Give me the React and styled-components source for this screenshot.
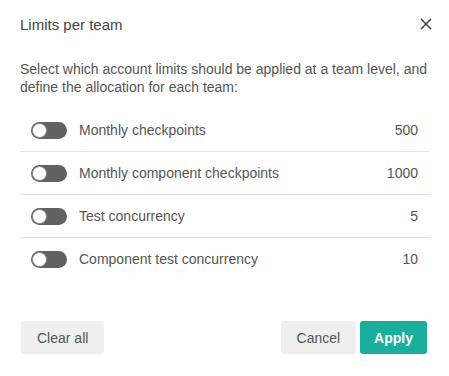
import styled, { createGlobalStyle } from "styled-components";

const GlobalStyle = createGlobalStyle`
  body {
    margin: 0;
    background: #fff;
    font-family: "Liberation Sans", Arial, sans-serif;
  }
`;

const Dialog = styled.div`
  width: 449px;
  height: 376px;
  box-sizing: border-box;
  background: #fff;
  display: flex;
  flex-direction: column;
`;

const Header = styled.div`
  display: flex;
  justify-content: space-between;
  align-items: center;
  padding: 14px 14px 0 20px;
  height: 20px;
`;

const Title = styled.h2`
  margin: 0;
  font-size: 15px;
  font-weight: 400;
  color: #444;
`;

const CloseButton = styled.button`
  border: none;
  background: none;
  padding: 0;
  width: 18px;
  height: 18px;
  display: flex;
  align-items: center;
  justify-content: center;
  cursor: pointer;
`;

const Description = styled.p`
  margin: 26px 20px 13px 20px;
  font-size: 14px;
  line-height: 18px;
  color: #555;
`;

const List = styled.div`
  margin: 0 20px;
  display: flex;
  flex-direction: column;
`;

const Row = styled.div`
  display: flex;
  align-items: center;
  height: 42px;
  padding: 0 11px 0 11px;
  border-bottom: ${(p) => (p.$last ? "none" : "1px solid #e4e4e4")};
`;

const Toggle = styled.span`
  width: 36px;
  height: 17px;
  border-radius: 9px;
  background: #616161;
  position: relative;
  flex-shrink: 0;

  &::after {
    content: "";
    position: absolute;
    left: 1px;
    top: 1px;
    width: 15px;
    height: 15px;
    box-sizing: border-box;
    border-radius: 50%;
    background: #fff;
    border: 1px solid #8a8a8a;
  }
`;

const Label = styled.span`
  margin-left: 12px;
  flex: 1;
  font-size: 14px;
  color: #555;
`;

const Value = styled.span`
  font-size: 14px;
  color: #555;
`;

const Footer = styled.div`
  margin-top: auto;
  display: flex;
  align-items: center;
  padding: 0 22px 22px 21px;
`;

const Spacer = styled.div`
  flex: 1;
`;

const Button = styled.button`
  height: 33px;
  border: none;
  border-radius: 3px;
  padding: ${(p) => (p.$primary ? "0 14px" : "0 16px")};
  font-family: inherit;
  font-size: 14px;
  cursor: pointer;
  background: ${(p) => (p.$primary ? "#1aae9f" : "#efefef")};
  color: ${(p) => (p.$primary ? "#fff" : "#555")};
  font-weight: ${(p) => (p.$primary ? 700 : 400)};
  margin-left: ${(p) => (p.$primary ? "4px" : "0")};
`;

const limits = [
  { label: "Monthly checkpoints", value: 500 },
  { label: "Monthly component checkpoints", value: 1000 },
  { label: "Test concurrency", value: 5 },
  { label: "Component test concurrency", value: 10 },
];

const App = () => {
  return (
    <>
      <GlobalStyle />
      <Dialog>
        <Header>
          <Title>Limits per team</Title>
          <CloseButton aria-label="Close">
            <svg width="12" height="12" viewBox="0 0 12 12">
              <path d="M1 1L11 11M11 1L1 11" stroke="#444" strokeWidth="1.6" />
            </svg>
          </CloseButton>
        </Header>
        <Description>
          Select which account limits should be applied at a team level, and
          define the allocation for each team:
        </Description>
        <List>
          {limits.map((l, i) => (
            <Row key={l.label} $last={i === limits.length - 1}>
              <Toggle />
              <Label>{l.label}</Label>
              <Value>{l.value}</Value>
            </Row>
          ))}
        </List>
        <Footer>
          <Button>Clear all</Button>
          <Spacer />
          <Button>Cancel</Button>
          <Button $primary>Apply</Button>
        </Footer>
      </Dialog>
    </>
  );
};

export default App;
